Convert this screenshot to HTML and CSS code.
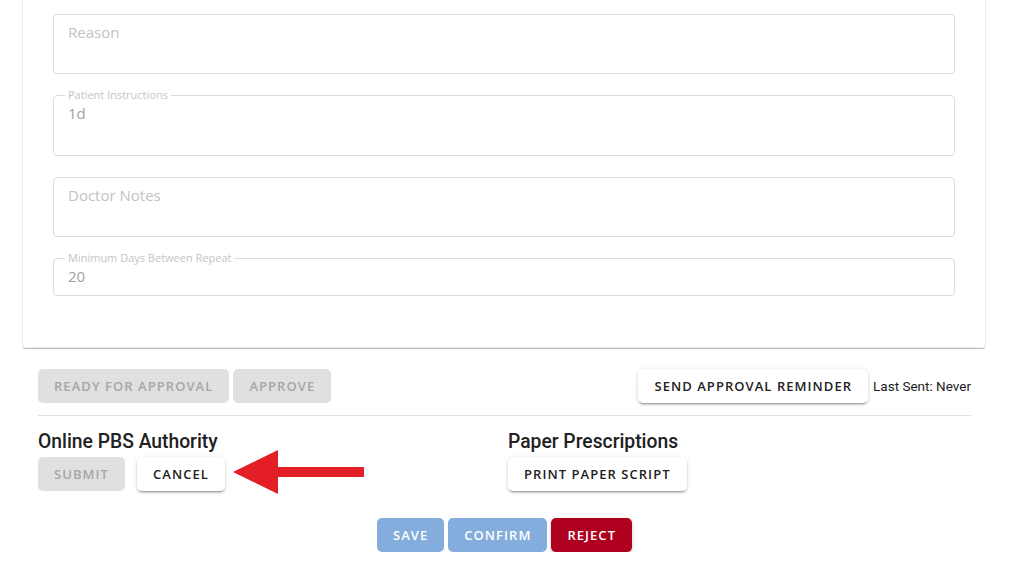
FILE: index.html
```html
<!DOCTYPE html>
<html lang="en">
<head>
    <meta charset="UTF-8">
    <meta name="viewport" content="width=device-width, initial-scale=1.0">
    <title>Prescription</title>
    <link rel="stylesheet" href="styles.css">
</head>
<body>
    <div class="page">
        <!-- form card (scrolled, top is off screen) -->
        <div class="card">
            <div class="field tall">
                <span class="placeholder">Reason</span>
            </div>
            <div class="field tall instructions">
                <span class="label">Patient Instructions</span>
                <span class="value">1d</span>
            </div>
            <div class="field tall">
                <span class="placeholder">Doctor Notes</span>
            </div>
            <div class="field short">
                <span class="label">Minimum Days Between Repeat</span>
                <span class="value">20</span>
            </div>
        </div>

        <div class="actions">
            <div class="approval-row">
                <div class="btn-group">
                    <button class="btn disabled">Ready for approval</button>
                    <button class="btn disabled">Approve</button>
                </div>
                <div class="reminder">
                    <button class="btn white">Send approval reminder</button>
                    <span class="last-sent">Last Sent: Never</span>
                </div>
            </div>

            <div class="divider"></div>

            <div class="sections">
                <div class="section">
                    <h3>Online PBS Authority</h3>
                    <div class="section-buttons">
                        <button class="btn disabled">Submit</button>
                        <button class="btn white">Cancel</button>
                        <svg class="arrow" width="131" height="44" viewBox="0 0 131 44">
                            <polygon points="0,22 45,0 45,44" fill="#e31e24"/>
                            <rect x="44" y="17" width="87" height="10" fill="#e31e24"/>
                        </svg>
                    </div>
                </div>
                <div class="section">
                    <h3>Paper Prescriptions</h3>
                    <div class="section-buttons">
                        <button class="btn white">Print paper script</button>
                    </div>
                </div>
            </div>

            <div class="footer-buttons">
                <button class="btn light-blue">Save</button>
                <button class="btn light-blue">Confirm</button>
                <button class="btn red">Reject</button>
            </div>
        </div>
    </div>
</body>
</html>
```

FILE: styles.css
```css
body {
    margin: 0;
    background: white;
    font-family: 'Open Sans', sans-serif;
    color: #212121;
}

.page {
    padding: 0 23px 0 22px;
}

.card {
    margin-top: -41px;
    padding: 54px 30px 51px 30px;
    border: 1px solid #ececec;
    border-radius: 4px;
    box-shadow: 0 2px 1px -1px rgba(0, 0, 0, 0.2), 0 1px 1px 0 rgba(0, 0, 0, 0.1);
    display: flex;
    flex-direction: column;
    gap: 21px;
}

.field {
    position: relative;
    border: 1px solid #dcdcdc;
    border-radius: 4px;
    padding: 7px 14px 0 14px;
    box-sizing: border-box;
}

.field.tall {
    height: 60px;
}

.field.instructions {
    height: 61px;
}

.field.short {
    height: 38px;
}

.field .label {
    position: absolute;
    top: -8px;
    left: 11px;
    padding: 0 3px;
    background: white;
    font-size: 11px;
    line-height: 14px;
    color: #c4c4c4;
}

.placeholder,
.value {
    display: block;
    font-size: 15px;
    line-height: 20px;
}

.placeholder {
    color: #c2c2c2;
}

.value {
    color: #a2a2a2;
}

.actions {
    padding: 21px 15px 0 16px;
}

.approval-row {
    display: flex;
    justify-content: space-between;
    align-items: center;
}

.btn-group {
    display: flex;
    gap: 4px;
}

.reminder {
    display: flex;
    align-items: center;
    gap: 5px;
}

.last-sent {
    font-family: Roboto, sans-serif;
    font-size: 13.5px;
    color: #212121;
}

.btn {
    height: 34px;
    padding: 0 16px;
    border: none;
    border-radius: 5px;
    font-family: 'Open Sans', sans-serif;
    font-size: 13px;
    font-weight: 600;
    letter-spacing: 1.05px;
    text-transform: uppercase;
    cursor: pointer;
}

.btn.disabled {
    background: #e0e0e0;
    color: #a6a6a6;
}

.btn.white {
    background: white;
    color: #212121;
    box-shadow: 0 3px 1px -2px rgba(0, 0, 0, 0.2), 0 2px 2px 0 rgba(0, 0, 0, 0.14), 0 1px 5px 0 rgba(0, 0, 0, 0.12);
}

.btn.light-blue {
    background: #84acdc;
    color: white;
}

.btn.red {
    background: #b00020;
    color: white;
    box-shadow: 0 3px 1px -2px rgba(0, 0, 0, 0.2), 0 2px 2px 0 rgba(0, 0, 0, 0.14), 0 1px 5px 0 rgba(0, 0, 0, 0.12);
}

.divider {
    height: 1px;
    background: #e0e0e0;
    margin-top: 12px;
}

.sections {
    display: grid;
    grid-template-columns: 470px 1fr;
}

.section h3 {
    margin: 15px 0 4px 0;
    font-family: Roboto, sans-serif;
    font-size: 19.3px;
    font-weight: 500;
    line-height: 22px;
    color: #212121;
}

.section-buttons {
    position: relative;
    display: flex;
    gap: 12px;
}

.arrow {
    position: absolute;
    left: 195px;
    top: -7px;
}

.footer-buttons {
    display: flex;
    justify-content: center;
    gap: 4px;
    margin-top: 27px;
}
```
